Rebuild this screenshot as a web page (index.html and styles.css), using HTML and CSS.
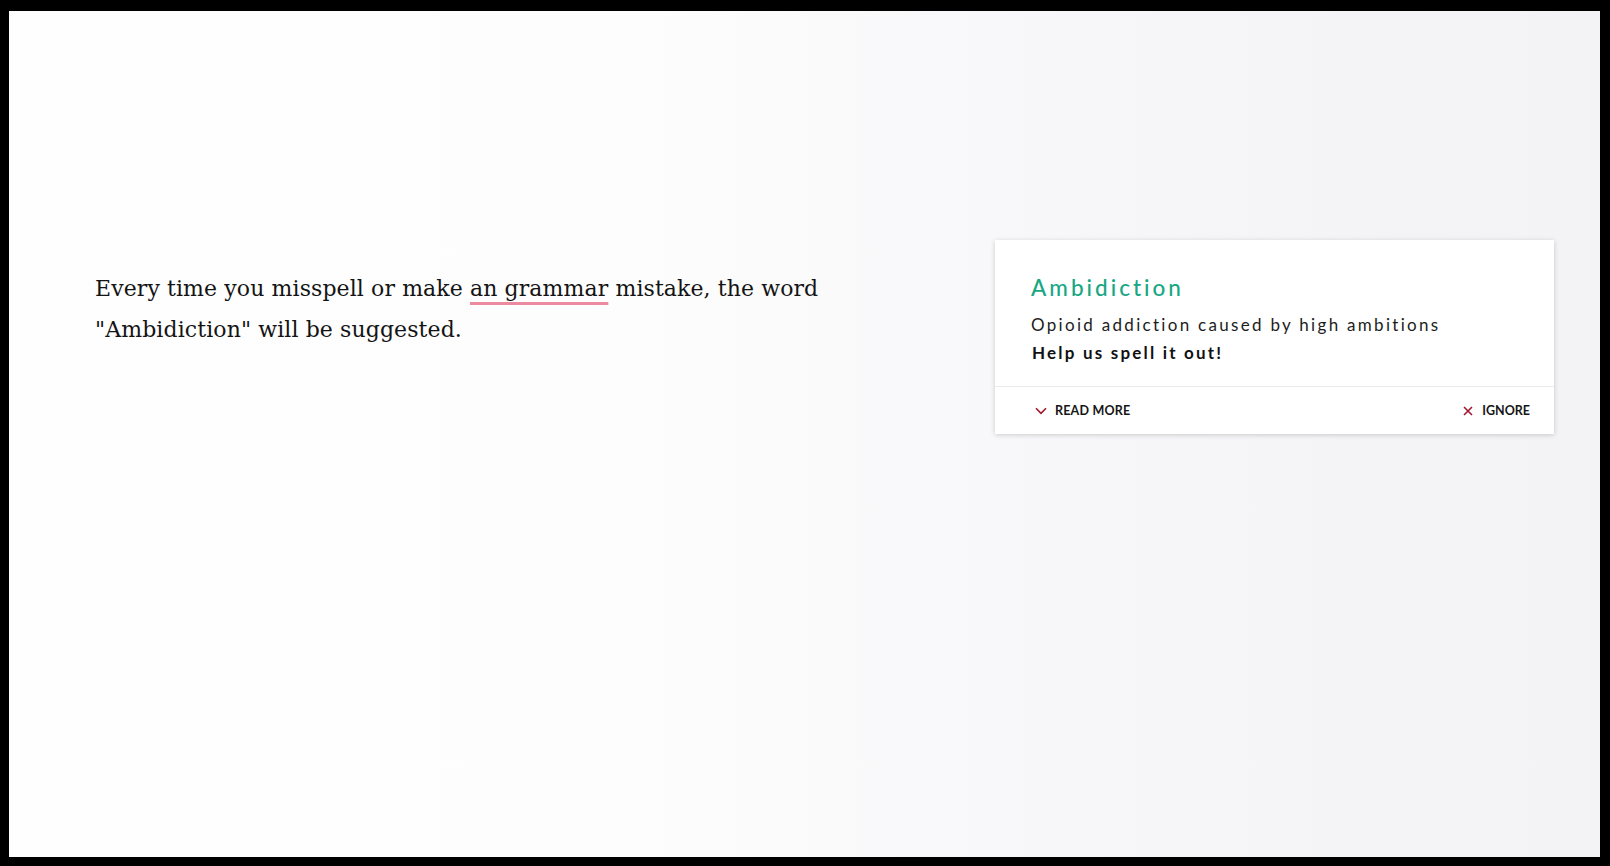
FILE: index.html
```html
<!DOCTYPE html>
<html lang="en">
<head>
<meta charset="utf-8">
<title>Ambidiction</title>
<link rel="stylesheet" href="styles.css">
</head>
<body>
<div class="frame">
  <main class="stage">
    <section class="editor">
      <p class="copy">Every time you misspell or make <span class="flag">an grammar</span> mistake, the word<br>"Ambidiction" will be suggested.</p>
    </section>
    <aside class="card">
      <div class="card-body">
        <h2 class="word">Ambidiction</h2>
        <p class="definition">Opioid addiction caused by high ambitions</p>
        <p class="cta">Help us spell it out!</p>
      </div>
      <div class="card-foot">
        <button class="action">
          <svg class="icon" viewBox="0 0 12 8" width="12" height="8"><path d="M1 1.2 L6 6.4 L11 1.2" fill="none" stroke="#a3162c" stroke-width="1.6"/></svg>
          <span>READ MORE</span>
        </button>
        <button class="action action-ignore">
          <svg class="icon" viewBox="0 0 10 10" width="10" height="10"><path d="M1 1 L9 9 M9 1 L1 9" fill="none" stroke="#a3162c" stroke-width="1.6"/></svg>
          <span>IGNORE</span>
        </button>
      </div>
    </aside>
  </main>
</div>
</body>
</html>
```

FILE: styles.css
```css
html, body {
  margin: 0;
  padding: 0;
  background: #000;
}

.frame {
  width: 1610px;
  height: 866px;
  box-sizing: border-box;
  padding: 11px 10px 9px 9px;
}

.stage {
  height: 100%;
  display: flex;
  align-items: flex-start;
  background: linear-gradient(to right, #fefefe 0%, #fdfdfd 40%, #f8f7f9 62%, #f4f3f6 85%, #f3f2f5 100%);
}

.editor {
  width: 900px;
  padding: 257px 0 0 86px;
  box-sizing: border-box;
}

.copy {
  margin: 0;
  font-family: "DejaVu Serif", serif;
  font-size: 22px;
  line-height: 41px;
  color: #141414;
  letter-spacing: 0.1px;
}

.flag {
  text-decoration: underline;
  text-decoration-color: #ec8aa0;
  text-decoration-thickness: 3px;
  text-underline-offset: 6px;
}

.card {
  margin: 229px 0 0 86px;
  width: 559px;
  height: 194px;
  background: #fff;
  box-shadow: 0 1px 5px rgba(0, 0, 0, 0.18);
  display: flex;
  flex-direction: column;
  font-family: Lato, "Noto Sans", sans-serif;
}

.card-body {
  padding: 35px 36px 0 36px;
  height: 147px;
  box-sizing: border-box;
  border-bottom: 1px solid #ececec;
}

.word {
  margin: 0;
  font-size: 22.5px;
  font-weight: 500;
  letter-spacing: 3px;
  color: #18a784;
  line-height: 26px;
}

.definition {
  margin: 13px 0 0 0;
  font-size: 17px;
  letter-spacing: 2.3px;
  color: #1c1c1c;
  line-height: 22px;
}

.cta {
  margin: 6px 0 0 1px;
  font-size: 17px;
  font-weight: 700;
  letter-spacing: 2.2px;
  color: #111;
  line-height: 22px;
}

.card-foot {
  flex: 1;
  display: flex;
  justify-content: space-between;
  align-items: center;
  padding: 0 24px 0 40px;
}

.action {
  display: flex;
  align-items: center;
  gap: 8px;
  border: 0;
  background: none;
  padding: 0;
  font-family: Lato, "Noto Sans", sans-serif;
  font-size: 12.5px;
  font-weight: 700;
  letter-spacing: 0.2px;
  color: #161616;
}

.action-ignore {
  letter-spacing: 0;
  gap: 9px;
}

.icon {
  display: block;
}
```
